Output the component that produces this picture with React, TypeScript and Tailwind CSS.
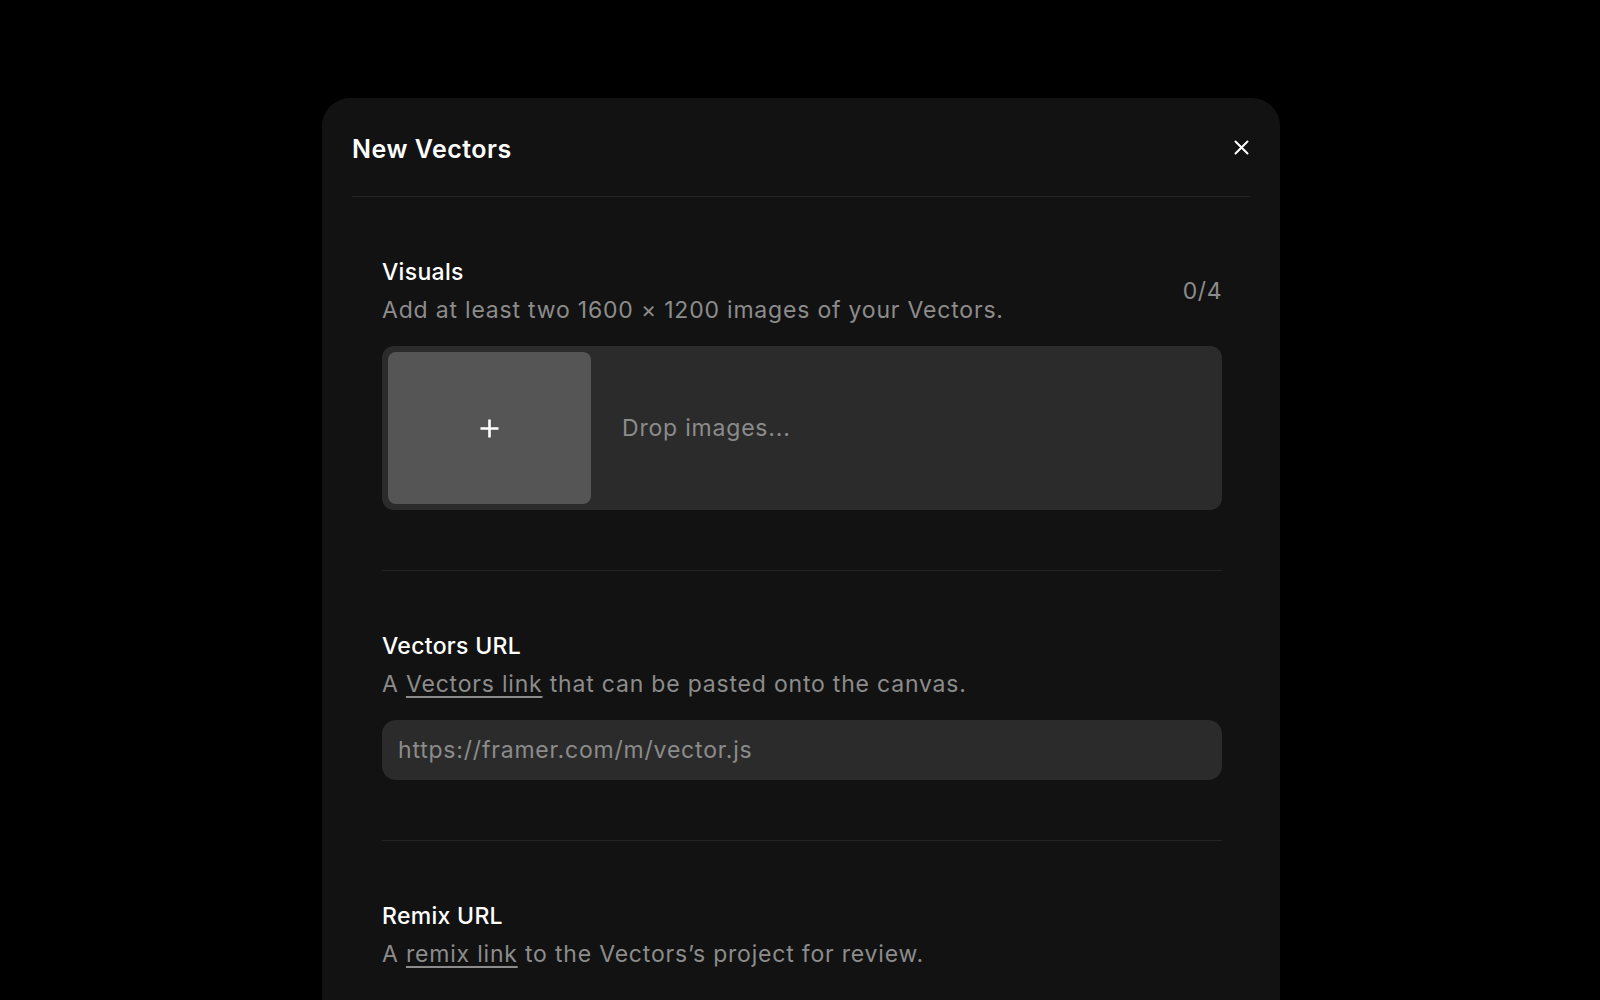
import React from "react";

const Section: React.FC<{
  title: string;
  desc: React.ReactNode;
  aside?: React.ReactNode;
  children?: React.ReactNode;
  last?: boolean;
}> = ({ title, desc, aside, children, last }) => (
  <div className={`py-[60px] ${last ? "" : "border-b border-[#242424]"}`}>
    <div className="flex items-center justify-between">
      <div>
        <div className="text-[23px] leading-[30px] font-medium tracking-[0.3px] text-white">{title}</div>
        <div className="mt-2 text-[23px] leading-[30px] tracking-[0.8px] text-[#8c8c8c]">{desc}</div>
      </div>
      {aside}
    </div>
    {children}
  </div>
);

const App: React.FC = () => {
  return (
    <div
      className="h-[1000px] overflow-hidden bg-black pt-[98px]"
      style={{ fontFamily: "Inter, 'Noto Sans', sans-serif" }}
    >
      <div className="mx-auto h-[960px] w-[958px] translate-x-[1px] rounded-t-[28px] bg-[#121212]">
        {/* Header */}
        <div className="ml-[30px] mr-[30px] flex h-[99px] items-center justify-between border-b border-[#242424]">
          <h1 className="mt-[3px] text-[25px] leading-8 font-semibold tracking-[0.5px] text-white">New Vectors</h1>
          <button aria-label="Close" className="mr-[1px] text-white">
            <svg width="15" height="15" viewBox="0 0 15 15" fill="none" stroke="currentColor" strokeWidth={2} strokeLinecap="round">
              <path d="M1.5 1.5l12 12M13.5 1.5l-12 12" />
            </svg>
          </button>
        </div>

        <div className="pl-[60px] pr-[58px]">
          {/* Visuals */}
          <Section
            title="Visuals"
            desc="Add at least two 1600 × 1200 images of your Vectors."
            aside={<span className="text-[23px] leading-[30px] tracking-[0.5px] text-[#8c8c8c]">0/4</span>}
          >
            <div className="mt-[21px] flex h-[164px] items-center rounded-[12px] bg-[#2b2b2b] p-[6px]">
              <div className="flex h-[152px] w-[203px] items-center justify-center rounded-[8px] bg-[#555555]">
                <svg width="19" height="19" viewBox="0 0 19 19" fill="none" stroke="white" strokeWidth={2.6}>
                  <path d="M9.5 0.5v18M0.5 9.5h18" />
                </svg>
              </div>
              <span className="ml-[31px] text-[23px] tracking-[0.8px] text-[#8c8c8c]">Drop images...</span>
            </div>
          </Section>

          {/* Vectors URL */}
          <Section
            title="Vectors URL"
            desc={
              <>
                A <span className="underline underline-offset-4 decoration-[1.5px]">Vectors link</span> that can be pasted onto the canvas.
              </>
            }
          >
            <div className="mt-[21px] flex h-[60px] items-center rounded-[14px] bg-[#2b2b2b] px-[16px]">
              <span className="text-[23px] tracking-[0.8px] text-[#8c8c8c]">https://framer.com/m/vector.js</span>
            </div>
          </Section>

          {/* Remix URL */}
          <Section
            title="Remix URL"
            last
            desc={
              <>
                A <span className="underline underline-offset-4 decoration-[1.5px]">remix link</span> to the Vectors’s project for review.
              </>
            }
          />
        </div>
      </div>
    </div>
  );
};

export default App;
